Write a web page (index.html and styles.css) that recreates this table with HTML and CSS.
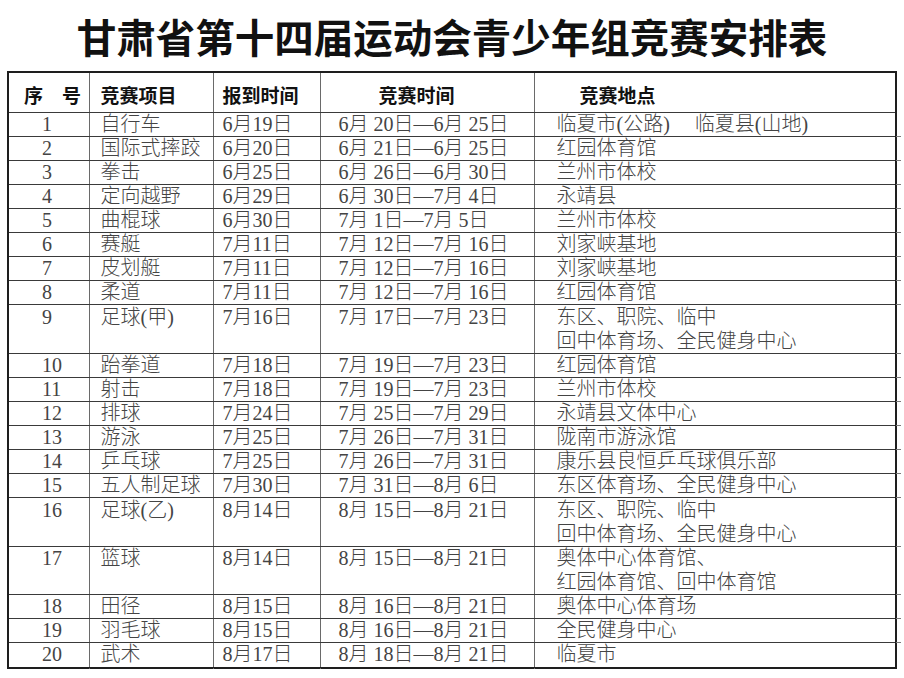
FILE: index.html
```html
<!DOCTYPE html>
<html lang="zh-CN">
<head>
<meta charset="utf-8">
<title>甘肃省第十四届运动会青少年组竞赛安排表</title>
<link rel="stylesheet" href="styles.css">
</head>
<body>
<h1 class="title">甘肃省第十四届运动会青少年组竞赛安排表</h1>
<table class="schedule">
  <colgroup>
    <col class="c-no"><col class="c-event"><col class="c-reg"><col class="c-time"><col class="c-venue">
  </colgroup>
  <thead>
    <tr>
      <th class="h-no">序　号</th>
      <th class="h-event">竞赛项目</th>
      <th class="h-reg">报到时间</th>
      <th class="h-time">竞赛时间</th>
      <th class="h-venue">竞赛地点</th>
    </tr>
  </thead>
  <tbody>
    <tr><td>1</td><td>自行车</td><td>6月19日</td><td>6月 20日—6月 25日</td><td>临夏市(公路)　 临夏县(山地)</td></tr>
    <tr><td>2</td><td>国际式摔跤</td><td>6月20日</td><td>6月 21日—6月 25日</td><td>红园体育馆</td></tr>
    <tr><td>3</td><td>拳击</td><td>6月25日</td><td>6月 26日—6月 30日</td><td>兰州市体校</td></tr>
    <tr><td>4</td><td>定向越野</td><td>6月29日</td><td>6月 30日—7月 4日</td><td>永靖县</td></tr>
    <tr><td>5</td><td>曲棍球</td><td>6月30日</td><td>7月 1日—7月 5日</td><td>兰州市体校</td></tr>
    <tr><td>6</td><td>赛艇</td><td>7月11日</td><td>7月 12日—7月 16日</td><td>刘家峡基地</td></tr>
    <tr><td>7</td><td>皮划艇</td><td>7月11日</td><td>7月 12日—7月 16日</td><td>刘家峡基地</td></tr>
    <tr><td>8</td><td>柔道</td><td>7月11日</td><td>7月 12日—7月 16日</td><td>红园体育馆</td></tr>
    <tr class="multi"><td>9</td><td>足球(甲)</td><td>7月16日</td><td>7月 17日—7月 23日</td><td>东区、职院、临中<br>回中体育场、全民健身中心</td></tr>
    <tr><td>10</td><td>跆拳道</td><td>7月18日</td><td>7月 19日—7月 23日</td><td>红园体育馆</td></tr>
    <tr><td>11</td><td>射击</td><td>7月18日</td><td>7月 19日—7月 23日</td><td>兰州市体校</td></tr>
    <tr><td>12</td><td>排球</td><td>7月24日</td><td>7月 25日—7月 29日</td><td>永靖县文体中心</td></tr>
    <tr><td>13</td><td>游泳</td><td>7月25日</td><td>7月 26日—7月 31日</td><td>陇南市游泳馆</td></tr>
    <tr><td>14</td><td>乒乓球</td><td>7月25日</td><td>7月 26日—7月 31日</td><td>康乐县良恒乒乓球俱乐部</td></tr>
    <tr><td>15</td><td>五人制足球</td><td>7月30日</td><td>7月 31日—8月 6日</td><td>东区体育场、全民健身中心</td></tr>
    <tr class="multi"><td>16</td><td>足球(乙)</td><td>8月14日</td><td>8月 15日—8月 21日</td><td>东区、职院、临中<br>回中体育场、全民健身中心</td></tr>
    <tr class="multi tight"><td>17</td><td>篮球</td><td>8月14日</td><td>8月 15日—8月 21日</td><td>奥体中心体育馆、<br>红园体育馆、回中体育馆</td></tr>
    <tr><td>18</td><td>田径</td><td>8月15日</td><td>8月 16日—8月 21日</td><td>奥体中心体育场</td></tr>
    <tr><td>19</td><td>羽毛球</td><td>8月15日</td><td>8月 16日—8月 21日</td><td>全民健身中心</td></tr>
    <tr class="last"><td>20</td><td>武术</td><td>8月17日</td><td>8月 18日—8月 21日</td><td>临夏市</td></tr>
  </tbody>
</table>
</body>
</html>
```

FILE: styles.css
```css
html, body {
  margin: 0;
  padding: 0;
  background: #ffffff;
}

.title {
  margin: 0;
  height: 71px;
  line-height: 72px;
  text-align: center;
  font-family: "Noto Sans CJK SC", sans-serif;
  font-weight: 700;
  font-size: 39.5px;
  color: #111111;
}

.schedule {
  margin-left: 7px;
  width: 888px;
  border-collapse: collapse;
  table-layout: fixed;
  border: 2px solid #1e1e1e;
  font-family: "Liberation Serif", "Noto Sans CJK SC", serif;
  font-size: 20px;
  color: #444444;
}

.c-no { width: 81px; }
.c-event { width: 124px; }
.c-reg { width: 107px; }
.c-time { width: 214px; }
.c-venue { width: 362px; }

.schedule th,
.schedule td {
  padding: 0;
  white-space: nowrap;
  text-align: left;
  border-top: 1px solid #3a3a3a;
  border-bottom: 1px solid #3a3a3a;
  border-left: 1px solid #6a6a6a;
  border-right: 1px solid #6a6a6a;
}

.schedule th {
  height: 34px;
  vertical-align: bottom;
  line-height: 24px;
  padding-bottom: 5px;
  font-family: "Noto Sans CJK SC", sans-serif;
  font-weight: 700;
  font-size: 19px;
  color: #111111;
}

.schedule td {
  position: relative;
  height: 23px;
  line-height: 23px;
  vertical-align: top;
  font-weight: 300;
}

.schedule tr.multi td {
  line-height: 24px;
}

.schedule tr.tight td {
  line-height: 23.5px;
}

.schedule th.h-no { padding-left: 15px; }
.schedule th.h-event { padding-left: 11px; }
.schedule th.h-reg { padding-left: 9px; }
.schedule th.h-time { padding-left: 58px; }
.schedule th.h-venue { padding-left: 45px; }

.schedule td:nth-child(1) { padding-left: 33px; }
.schedule td:nth-child(2) { padding-left: 11px; }
.schedule td:nth-child(3) { padding-left: 9px; }
.schedule td:nth-child(4) { padding-left: 18px; }
.schedule td:nth-child(5) { padding-left: 22px; }

.schedule tr.last td {
  height: 24px;
}

/* scanned-table artefacts: rules overshooting the frame */
.schedule td:last-child::before {
  content: "";
  position: absolute;
  right: -6px;
  bottom: -1px;
  width: 5px;
  border-bottom: 1px solid #7a7a7a;
}

.schedule tr.last td:last-child::before {
  display: none;
}

.schedule tr.last td + td::after {
  content: "";
  position: absolute;
  left: -1px;
  bottom: -5px;
  height: 4px;
  border-left: 1px solid #6a6a6a;
}
```
